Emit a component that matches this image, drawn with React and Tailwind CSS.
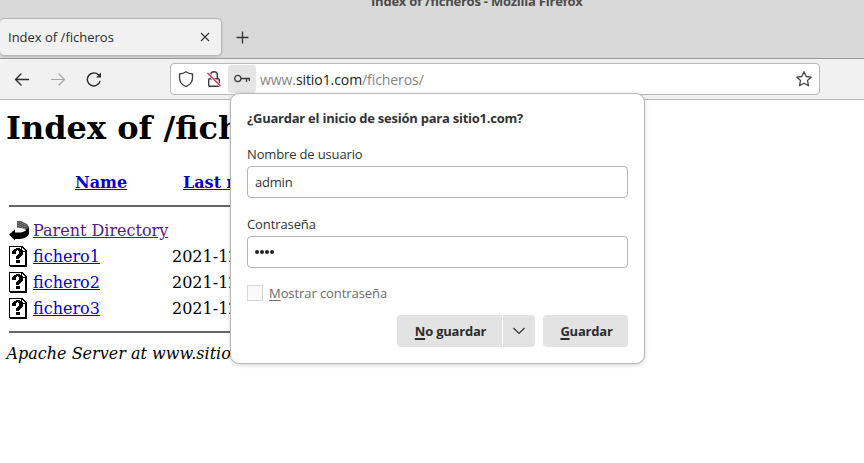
const ui = "font-['Open_Sans','Noto_Sans',sans-serif]";
const serif = "font-['DejaVu_Serif',serif]";

function UnknownIcon() {
  return (
    <svg className="h-[22px] w-5 shrink-0" viewBox="0 0 20 22" shapeRendering="crispEdges">
      <path d="M0 0h13l5 5v16H1v-1H0z" fill="#000" />
      <path d="M1 1h11v5h4v13H1z" fill="#fff" />
      <path d="M13 2l3 3h-3z" fill="#fff" />
      <path d="M3 5h1V4h1V3h2V2h4v1h2v1h1v5h-1v1h-1v1h-1v1h-1v1H7v-3h1V9h1V8h1V5H9V4H8v1H7v3H3zM7 14h4v3H7z" fill="#000" />
    </svg>
  );
}

function BackIcon() {
  return (
    <svg className="h-[22px] w-5 shrink-0" viewBox="0 0 20 22">
      <path d="M8 1h4l6 3 2 3v3l-2 .5-4-2-6-1z" fill="#555" />
      <path d="M9.500 1v6M11.500 2v6M13.500 3v5M15.500 4v5" stroke="#aaa" strokeWidth=".6" strokeDasharray="1 1" />
      <path d="M0 14.500L6 9.500v3c6 .5 10-.5 12-3.500l2-1v6c-2 4-7 5.500-14 5v1.500z" fill="#000" />
    </svg>
  );
}

function Row({ name }) {
  return (
    <div className="flex h-[26px] items-center">
      <UnknownIcon />
      <a className="ml-1 w-[139px] text-[#0000cc] underline">{name}</a>
      <span className="whitespace-nowrap">2021-12-01 10:15</span>
    </div>
  );
}

function TopBar() {
  return (
    <header className="relative h-[59px] border-b border-[#999] bg-[#d9d9d9] pt-[18px]">
      <div className="absolute left-[371px] top-[-8px] whitespace-nowrap text-[13px] font-bold leading-[18px] tracking-[-0.23px] text-[#4c4c4c]">Index of /ficheros - Mozilla Firefox</div>
      <div className="flex items-center">
        <div className="flex h-[38px] w-[222px] items-center justify-between rounded-[5px] border border-l-0 border-[#b7b7b7] bg-[#f1f1f1] pl-2 pr-[11px] shadow-sm">
          <span className="pt-px text-[13px] text-[#2c2c2c]">Index of /ficheros</span>
          <svg className="size-[10px]" viewBox="0 0 10 10" stroke="#333" strokeWidth="1.1"><path d="M1 1l8 8M9 1L1 9" /></svg>
        </div>
        <svg className="ml-[14px] size-[13px]" viewBox="0 0 13 13" stroke="#333" strokeWidth="1.300"><path d="M6.500 .5v12M.5 6.500h12" /></svg>
      </div>
    </header>
  );
}

function Toolbar() {
  return (
    <nav className="flex h-[41px] items-center border-b border-[#b8b8b8] bg-[#f1f1f1] pl-[14px]">
      <svg className="size-4" viewBox="0 0 16 16" fill="none" stroke="#2e2e2e" strokeWidth="1.400" strokeLinecap="round" strokeLinejoin="round"><path d="M14.500 8.500H1.500M7 3l-5.500 5.500L7 14" /></svg>
      <svg className="ml-5 size-4" viewBox="0 0 16 16" fill="none" stroke="#a6a6a6" strokeWidth="1.200" strokeLinecap="round" strokeLinejoin="round"><path d="M1.500 8.500H14.500M9 3l5.500 5.500L9 14" /></svg>
      <svg className="ml-5 size-4" viewBox="0 0 16 16" fill="none" stroke="#2e2e2e" strokeWidth="1.400" strokeLinecap="round"><path d="M14 10.500a6.500 6.500 0 1 1-1.400-6.500" /><path d="M15 1.500v5h-5z" fill="#2e2e2e" stroke="none" /></svg>
      <div className="ml-[68px] flex h-8 w-[650px] items-center rounded-[4px] border border-[#b8b8b8] bg-white pl-[7px]">
        <svg className="size-4" viewBox="0 0 16 16" fill="none" stroke="#3c3c3c" strokeWidth="1.300" strokeLinejoin="round"><path d="M8 .8C6 2.300 4 2.800 1.500 3v3.500C1.500 11 4 14 8 15.500c4-1.500 6.500-4.500 6.500-9V3C12 2.800 10 2.300 8 .8z" /></svg>
        <svg className="ml-3 size-4" viewBox="0 0 16 16" fill="none" stroke="#3c3c3c" strokeWidth="1.400"><rect x="2.700" y="7.700" width="10.600" height="7.500" rx="1" /><path d="M4.700 7V4a3.300 3.300 0 0 1 6.600 0v3.500" /><path d="M1.500 2l13 13" stroke="#fff" strokeWidth="2.500" /><path d="M1.500 2l13 13" stroke="#e22850" strokeWidth="1.400" /></svg>
        <div className="ml-[6px] flex h-7 w-7 items-center justify-center rounded-[3px] bg-[#e5e5e5]">
          <svg className="size-[16px]" viewBox="0 0 16 16" fill="none" stroke="#3c3c3c" strokeWidth="1.300"><circle cx="3.800" cy="7.500" r="3.100" /><path d="M6.900 7.500H16M12.500 7.500v3.500M15.300 7.500v2.500" /></svg>
        </div>
        <span className="ml-[4px] text-[14px] tracking-[-0.08px] text-[#858585]">www.<span className="text-[#222]">sitio1.com</span>/ficheros/</span>
        <svg className="ml-auto mr-[7px] size-4" viewBox="0 0 16 16" fill="none" stroke="#444" strokeWidth="1.300" strokeLinejoin="round"><path d="M8 .8l2.200 4.700 5 .6-3.700 3.400 1 5.300L8 12.300l-4.500 2.500 1-5.300L.8 6.100l5-.6z" /></svg>
      </div>
    </nav>
  );
}

function Listing() {
  return (
    <main className={`${serif} w-[864px] pl-[6px] pt-[9px] text-[16px] text-black`}>
      <h1 className="text-[32px] font-bold leading-[38px]">Index of /ficheros</h1>
      <div className="ml-[3px] w-[500px]">
        <div className="flex h-[58px] items-center whitespace-nowrap pt-[14px] font-bold text-[#0000cc]">
          <a className="ml-[66px] w-[108px] underline">Name</a>
          <a className="underline">Last modified</a>
        </div>
        <hr className="h-[2px] border-0 bg-[#666]" />
        <div className="pt-[11px]">
          <div className="flex h-[26px] items-center"><BackIcon /><a className="ml-1 text-[#551a8b] underline">Parent Directory</a></div>
          <Row name="fichero1" />
          <Row name="fichero2" />
          <Row name="fichero3" />
        </div>
        <hr className="mt-[9px] h-[2px] border-0 bg-[#666]" />
      </div>
      <address className="mt-[9px] whitespace-nowrap pl-[0.5px] italic leading-6">Apache Server at www.sitio1.com Port 80</address>
    </main>
  );
}

function SavePanel() {
  return (
    <section className="absolute left-[230px] top-[93px] h-[271px] w-[415px] rounded-[9px] border border-[#b8b8b8] bg-white px-4 pt-[15px] text-[13px] leading-[18px] text-[#333] shadow-[0_1px_4px_rgba(0,0,0,0.18)]">
      <h2 className="whitespace-nowrap font-bold tracking-[-0.24px]">¿Guardar el inicio de sesión para sitio1.com?</h2>
      <label className="mt-[18px] block tracking-[-0.15px]">Nombre de usuario</label>
      <div className="mt-[3px] flex h-8 items-center rounded-[4px] border border-[#b5b5b5] px-[7px] tracking-[-0.2px]">admin</div>
      <label className="mt-[17px] block tracking-[-0.1px]">Contraseña</label>
      <div className="mt-[3px] flex h-8 items-center gap-[1px] rounded-[4px] border border-[#b5b5b5] px-[7px]">
        {[0, 1, 2, 3].map((i) => <span key={i} className="size-[4px] rounded-full bg-[#222]" />)}
      </div>
      <div className="mt-[16px] flex items-center text-[#6c6c6c]">
        <span className="mr-[6px] size-4 border border-[#d8d8d8] bg-[#fafafa]" />
        <span className="tracking-[-0.08px]"><u className="underline-offset-2">M</u>ostrar contraseña</span>
      </div>
      <div className="mt-[13px] flex h-8 justify-end font-bold tracking-[-0.22px] text-[#2c2c2c]">
        <button className="w-[105px] rounded-l-[4px] bg-[#e3e3e3] pl-[2px]"><u className="decoration-2 underline-offset-2">N</u>o guardar</button>
        <button className="ml-px flex w-8 items-center justify-center rounded-r-[4px] bg-[#e3e3e3]"><svg className="h-2 w-3" viewBox="0 0 12 8" fill="none" stroke="#333" strokeWidth="1.200"><path d="M.5 1L6 6.500 11.500 1" /></svg></button>
        <button className="ml-2 w-[85px] rounded-[4px] bg-[#e3e3e3] pl-[2px]"><u className="decoration-2 underline-offset-2">G</u>uardar</button>
      </div>
    </section>
  );
}

export default function App() {
  return (
    <div className={`${ui} relative h-[463px] w-[864px] overflow-hidden bg-white`}>
      <TopBar />
      <Toolbar />
      <Listing />
      <SavePanel />
    </div>
  );
}
